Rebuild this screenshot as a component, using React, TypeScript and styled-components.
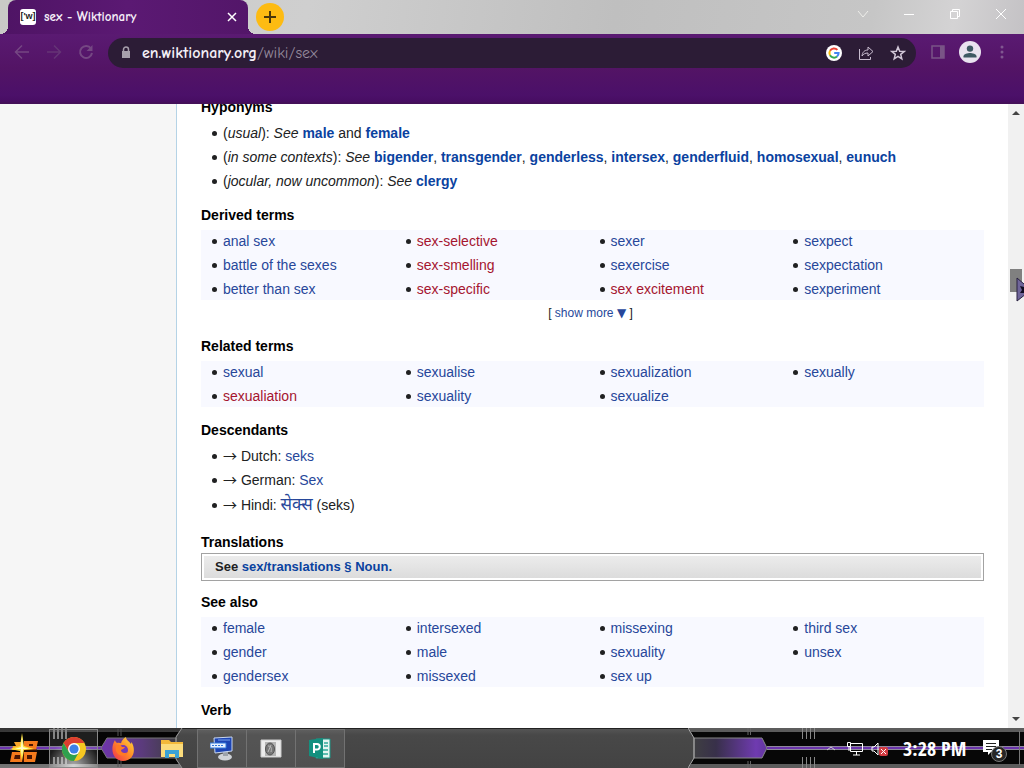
import React from "react";
import styled, { createGlobalStyle, css } from "styled-components";

const Global = createGlobalStyle`
  * { box-sizing: border-box; }
  body { margin: 0; background: #fff; }
  button { border: 0; padding: 0; background: none; font: inherit; color: inherit; }
  svg { display: block; }
`;

const uiFont = `"Comic Neue", Lato, "Open Sans", sans-serif`;

const Screen = styled.div`
  display: flex;
  flex-direction: column;
  height: 100vh;
  overflow: hidden;
  font-family: "Liberation Sans", Arial, sans-serif;
  font-size: 14px;
  line-height: 22px;
  color: #202122;
`;

/* ---------- browser frame ---------- */

const TabStrip = styled.header`
  display: flex;
  flex: none;
  height: 34px;
  padding-left: 8px;
  background: linear-gradient(100deg, #c9cac6 0%, #cfcfcf 30%, #bfbfbf 60%, #c6c6c6 85%, #d4d3d4 93%, #c4c2c5 100%);
`;

const Tab = styled.div`
  position: relative;
  display: flex;
  align-items: center;
  width: 240px;
  padding: 0 8px 0 12px;
  border-radius: 8px 8px 0 0;
  background: linear-gradient(90deg, #4f1465, #5b1973 50%, #531669);
  color: #f6eef8;
  font: 700 13px/18px ${uiFont};

  &::before,
  &::after {
    content: "";
    position: absolute;
    bottom: 0;
    width: 8px;
    height: 8px;
  }
  &::before {
    left: -8px;
    background: radial-gradient(circle at 0 0, transparent 8px, #4f1465 8px);
  }
  &::after {
    right: -8px;
    background: radial-gradient(circle at 100% 0, transparent 8px, #531669 8px);
  }
`;

const Favicon = styled.span`
  width: 16px;
  height: 16px;
  margin-right: 8px;
  border-radius: 3px;
  background: #fff;
  color: #222;
  font: 700 9px/15px "Liberation Sans", sans-serif;
  text-align: center;
`;

const TabTitle = styled.span`
  flex: 1;
`;

const IconButton = styled.button<{ $w?: number; $color?: string }>`
  display: flex;
  flex: none;
  align-items: center;
  justify-content: center;
  width: ${(p) => p.$w ?? 32}px;
  height: 28px;
  color: ${(p) => p.$color ?? "#81548f"};
`;

const NewTab = styled.button`
  display: flex;
  align-items: center;
  justify-content: center;
  width: 28px;
  height: 28px;
  margin: 3px 0 0 8px;
  border-radius: 50%;
  background: #fdbb12;
`;

const WindowControls = styled.div`
  display: flex;
  margin-left: auto;
`;

const Toolbar = styled.nav`
  display: flex;
  flex: none;
  align-items: flex-start;
  height: 70px;
  padding: 4px 6px;
  background: linear-gradient(#5a1a72, #531465 50%, #4b1069 90%, #470d62);
  border-bottom: 2px solid #441059;
`;

const Omnibox = styled.label`
  display: flex;
  flex: 1;
  align-items: center;
  height: 30px;
  margin: 0 6px;
  padding: 0 2px 0 12px;
  border-radius: 15px;
  background: #2c1c36;
  color: #958a9c;
  font: 400 16px/20px ${uiFont};
`;

const Address = styled.input`
  field-sizing: content;
  margin-left: 10px;
  padding: 0;
  border: 0;
  background: none;
  color: #f4eff6;
  font: inherit;
  font-weight: 700;
`;

const Path = styled.span`
  flex: 1;
`;

/* ---------- page ---------- */

const Viewport = styled.div`
  display: flex;
  flex: 1;
  min-height: 0;
`;

const Sidebar = styled.aside`
  flex: none;
  width: 177px;
  border-right: 1px solid #b5d3e6;
  background: #f6f6f6;
`;

const Article = styled.main`
  flex: 1;
  min-width: 0;
  overflow: hidden;
  padding: 0 24px;
  background: #fff;
`;

const Scrolled = styled.div`
  margin-top: -8px;
`;

const Section = styled.section<{ $gap?: number }>`
  margin-bottom: ${(p) => p.$gap ?? 12}px;
`;

const Heading = styled.h4<{ $flush?: boolean }>`
  margin: 0 0 ${(p) => (p.$flush ? 0 : 4)}px;
  color: #000;
  font-size: 14px;
  line-height: 22px;
`;

const bullets = css`
  margin: 0;
  padding: 0 0 0 22px;
  list-style: none;

  li::before {
    content: "";
    display: inline-block;
    width: 5px;
    height: 5px;
    margin: 0 6px 0 -11px;
    border-radius: 50%;
    background: #202122;
    vertical-align: 2px;
  }
`;

const List = styled.ul`
  ${bullets}
  display: flex;
  flex-direction: column;
  gap: 2px;
`;

const TermGrid = styled.ul<{ $rows: number }>`
  ${bullets}
  display: grid;
  grid-template-rows: repeat(${(p) => p.$rows}, auto);
  grid-template-columns: repeat(4, 1fr);
  grid-auto-flow: column;
  gap: 2px 14px;
  background: #f8f9ff;
`;

const Link = styled.a<{ $missing?: boolean; $strong?: boolean }>`
  color: ${(p) => (p.$missing ? "#a5152f" : p.$strong ? "#0a429f" : "#27479a")};
  text-decoration: none;
  ${(p) => p.$strong && css`font-weight: 700;`}
`;

const Arrow = styled.span`
  font-family: "Noto Sans CJK JP", sans-serif;
  line-height: 1;
`;

const Hindi = styled(Link)`
  font-family: "Noto Sans Devanagari", "Noto Sans", sans-serif;
  font-size: 17px;
  line-height: 26px;
`;

const ShowMore = styled.div`
  margin-top: 3px;
  padding-right: 4px;
  font-size: 12px;
  line-height: 20px;
  text-align: center;

  button { color: #27479a; }
  span { font-family: "DejaVu Sans", sans-serif; line-height: 1; }
`;

const NavBox = styled.div`
  padding: 2px;
  border: 1px solid #a2a2a2;

  p {
    margin: 0;
    padding: 0 11px;
    background: linear-gradient(#ececec, #dcdcdc);
    font-size: 13px;
    font-weight: 700;
  }
`;

const ScrollBar = styled.div`
  display: flex;
  flex: none;
  flex-direction: column;
  width: 16px;
  background: #f1f1f1;
`;

const ScrollArrow = styled.button`
  display: flex;
  align-items: center;
  justify-content: center;
  height: 18px;
`;

const Track = styled.div`
  flex: 1;
  padding: 0 2px;
`;

const TrackGap = styled.div`
  height: 25%;
`;

const Thumb = styled.div`
  position: relative;
  height: 23px;
  background: #808080;
`;

const Cursor = styled.svg`
  position: absolute;
  top: 8px;
  left: 6px;
`;

/* ---------- taskbar ---------- */

const Taskbar = styled.footer`
  position: relative;
  display: flex;
  flex: none;
  align-items: stretch;
  height: 40px;
  background: linear-gradient(#555 0, #484848 6px, #434343);
  border-top: 1px solid #222;
`;

const Trim = styled.svg<{ $side: "left" | "right" }>`
  position: absolute;
  top: -1px;
  ${(p) => p.$side}: 0;
`;

const TaskButton = styled.button<{ $open?: boolean; $active?: boolean }>`
  position: relative;
  display: flex;
  align-items: center;
  justify-content: center;
  width: 49px;
  ${(p) => p.$open && css`
    border: 1px solid #727272;
    border-width: 1px 1px 1px 0;
    background: rgba(255, 255, 255, 0.07);
  `}
  ${(p) => p.$active && css`
    border: 1px solid #888;
    background: radial-gradient(circle at 50% 100%, rgba(255, 255, 255, 0.7), rgba(255, 255, 255, 0.1) 60%);
  `}
`;

const PinnedApps = styled.div`
  display: flex;
  width: 198px;
  border-right: 1px solid #727272;
`;

const Tray = styled.div`
  position: relative;
  display: flex;
  align-items: center;
  margin-left: auto;
  padding-right: 14px;
  color: #fff;
`;

const TrayButton = styled.button<{ $w: number }>`
  display: flex;
  justify-content: center;
  width: ${(p) => p.$w}px;
`;

const Clock = styled.time`
  width: 62px;
  margin: 0 18px 0 12px;
  font: 700 20px/26px "Liberation Sans Narrow", "Open Sans Condensed", "Liberation Sans", sans-serif;
  white-space: nowrap;
`;

const Notices = styled.button`
  position: relative;
`;

const Badge = styled.span`
  position: absolute;
  top: 7px;
  left: 8px;
  width: 16px;
  height: 16px;
  border: 1px solid #777;
  border-radius: 50%;
  background: #262626;
  color: #fff;
  font: 700 12px/14px "Liberation Sans", sans-serif;
  text-align: center;
`;

/* ---------- data ---------- */

type Term = { text: string; missing?: boolean };
const t = (text: string): Term => ({ text });
const red = (text: string): Term => ({ text, missing: true });

const derived = [
  t("anal sex"), t("battle of the sexes"), t("better than sex"),
  red("sex-selective"), red("sex-smelling"), red("sex-specific"),
  t("sexer"), t("sexercise"), red("sex excitement"),
  t("sexpect"), t("sexpectation"), t("sexperiment"),
];
const related = [
  t("sexual"), red("sexualiation"), t("sexualise"), t("sexuality"),
  t("sexualization"), t("sexualize"), t("sexually"),
];
const seeAlso = [
  t("female"), t("gender"), t("gendersex"),
  t("intersexed"), t("male"), t("missexed"),
  t("missexing"), t("sexuality"), t("sex up"),
  t("third sex"), t("unsex"),
];
const contexts = ["bigender", "transgender", "genderless", "intersex", "genderfluid", "homosexual", "eunuch"];

const Terms = ({ items, rows }: { items: Term[]; rows: number }) => (
  <TermGrid $rows={rows}>
    {items.map((item) => (
      <li key={item.text}>
        <Link href="#" $missing={item.missing}>{item.text}</Link>
      </li>
    ))}
  </TermGrid>
);

/* ---------- drawings ---------- */

const Stroke = ({ d, size = 16, w = 2 }: { d: string; size?: number; w?: number }) => (
  <svg width={size} height={size} viewBox="0 0 16 16" fill="none" stroke="currentColor" strokeWidth={w}>
    <path d={d} />
  </svg>
);

const GoogleLogo = () => (
  <svg width="16" height="16" viewBox="0 0 16 16" fill="none" strokeWidth="2">
    <circle cx="8" cy="8" r="8" fill="#fff" />
    <path d="M11.4 4.9A4.6 4.6 0 0 0 4 5.8" stroke="#ea4335" />
    <path d="M4 5.8a4.7 4.7 0 0 0 0 4.5" stroke="#fbbc05" />
    <path d="M4 10.3a4.6 4.6 0 0 0 7 1.2" stroke="#34a853" />
    <path d="M11 11.5A4.6 4.6 0 0 0 12.6 8H8.2" stroke="#4285f4" />
  </svg>
);

const Avatar = () => (
  <svg width="22" height="22" viewBox="0 0 22 22">
    <circle cx="11" cy="11" r="11" fill="#e9e3ef" />
    <circle cx="11" cy="7.6" r="3.2" fill="#3f5a63" />
    <path d="M4.5 16.5v-1.2c0-2.2 4.3-3.3 6.5-3.3s6.5 1.1 6.5 3.3v1.2z" fill="#3f5a63" />
  </svg>
);

const LeftTrim = () => (
  <Trim $side="left" width="200" height="40" viewBox="0 0 200 40" aria-hidden="true">
    <defs>
      <linearGradient id="pillLeft"><stop offset="0" stopColor="#6f35ad" /><stop offset="0.55" stopColor="#5b3b7c" /><stop offset="1" stopColor="#3e3e42" /></linearGradient>
      <linearGradient id="edge" x2="0" y2="1"><stop offset="0" stopColor="#333" /><stop offset="1" stopColor="#777" /></linearGradient>
    </defs>
    <path d="M0 0h182l-6 8v24l6 8H0z" fill="#050505" />
    <path d="M0 0h182l-3 4H0zM0 36h179l3 4H0z" fill="url(#edge)" />
    <path d="M0 18.500h102M0 21.500h102" stroke="#77708a" />
    <path d="M0 20h102" stroke="#6e35b0" strokeWidth="2" />
    <path d="M101 20l6-10h69v20h-69z" fill="url(#pillLeft)" stroke="#777" />
    <path d="M182 0l-6 9v22l6 9" fill="none" stroke="#999" />
    <path d="M54 0v11M58 0v11M62 0v11M66 0v11M54 29v11M58 29v11M62 29v11M66 29v11" stroke="#777" strokeWidth="2" />
    <path d="M118 1v7M121 1v7M118 32v7M121 32v7" stroke="#555" />
  </Trim>
);

const RightTrim = () => (
  <Trim $side="right" width="336" height="40" viewBox="0 0 336 40" aria-hidden="true">
    <defs>
      <linearGradient id="pillRight"><stop offset="0" stopColor="#3f3f42" /><stop offset="0.3" stopColor="#38304a" /><stop offset="0.85" stopColor="#6f3bb0" /><stop offset="1" stopColor="#6236a0" /></linearGradient>
    </defs>
    <path d="M0 0h336v40H0l6-10V10z" fill="#070707" />
    <path d="M0 0h336v4H3zM3 36h333v4H0z" fill="#5c5c5c" />
    <path d="M6 10h68l5 10-5 10H6z" fill="url(#pillRight)" stroke="#888" />
    <path d="M79 18.500h257M79 21.500h257" stroke="#8f899c" />
    <path d="M79 20h257" stroke="#6a34ab" strokeWidth="2" />
    <path d="M0 0l6 10v20l-6 10" fill="none" stroke="#aaa" />
    <path d="M114.500 0v11M118.500 0v11M122.500 0v11M126.500 0v11M114.500 29v11M118.500 29v11M122.500 29v11M126.500 29v11" stroke="#888" />
    <path d="M60 0v7M62.500 0v7M60 33v7M62.500 33v7" stroke="#666" />
    <path d="M331.500 3v34" stroke="#777" />
  </Trim>
);

const StartEmblem = () => (
  <svg width="30" height="34" viewBox="0 0 30 34">
    <path d="M14 9h14l-2 9H14zM2 20h25l-2 10H0z" fill="#f47a1c" />
    <path d="M4 10h8v8H2l1-4h3z" fill="#f9a62a" />
    <path d="M19 12h4v2h-4zM5 23h5v4H4zM17 23h5v4h-5zM12 20h2v10h-2z" fill="#4a1502" />
    <path d="M14 18.500h13" stroke="#2b0d02" strokeWidth="2" />
    <path d="M12 1l2 13 10 3-10 1-2 11-2-10-10-2 10-3z" fill="#ffe23a" />
    <path d="M12 4l1 11 6 2-6 0-1 7-1-7-6 0 6-2z" fill="#fffcc8" />
  </svg>
);

const ChromeLogo = () => (
  <svg width="24" height="24" viewBox="0 0 24 24">
    <circle cx="12" cy="12" r="12" fill="#f6c721" />
    <path d="M12 6h10.400A12 12 0 0 0 1.600 6L7 15z" fill="#dc3e30" />
    <path d="M7 15L1.600 6A12 12 0 0 0 12 24l5-9z" fill="#2fa04e" />
    <circle cx="12" cy="12" r="6" fill="#fff" />
    <circle cx="12" cy="12" r="4.600" fill="#3d80e8" />
  </svg>
);

const FirefoxLogo = () => (
  <svg width="24" height="24" viewBox="0 0 24 24">
    <defs>
      <linearGradient id="fox" x1="1" y1="0" x2="0" y2="1"><stop offset="0" stopColor="#ffdf3a" /><stop offset="0.5" stopColor="#ff8528" /><stop offset="1" stopColor="#ee2c55" /></linearGradient>
    </defs>
    <path d="M4 3c0 1 .8 2 2 3 2-.5 3-.2 4 .3C10.500 3.500 13 1 15 0c0 3 3 4 5 7l.5-2c5 8 2 19-8.500 19C3 24-2 13 4 3z" fill="url(#fox)" />
    <circle cx="12" cy="13" r="5" fill="#7439b8" />
    <path d="M5 9c3-2 5-1 6 1h3c-1 2-3 2-4 3 0 3 4 4 7 2-2 5-10 5-12-1z" fill="#ff7a24" />
  </svg>
);

const FolderIcon = () => (
  <svg width="24" height="22" viewBox="0 0 24 22">
    <path d="M1 2h8l2 2h12v15H1z" fill="#f3b93a" />
    <path d="M1 6h22v13H1z" fill="#fbdc7c" />
    <path d="M5 20v-8h14v8h-4v-4H9v4z" fill="#3ba2d6" />
  </svg>
);

const MonitorIcon = () => (
  <svg width="24" height="26" viewBox="0 0 24 26">
    <ellipse cx="15" cy="21" rx="7" ry="3.500" fill="#cfd3d8" />
    <path d="M13 15h5v5h-5z" fill="#9ba2aa" />
    <path d="M4 2l18-1v14L5 17z" fill="#1d45b4" stroke="#c8d7f0" />
    <path d="M0 7h16v5H0z" fill="#e7f1ff" stroke="#3278d8" />
    <path d="M2 9.500h12" stroke="#3278d8" strokeDasharray="2 1" />
    <path d="M8 4h12" stroke="#7aa5ec" />
  </svg>
);

const SafeIcon = () => (
  <svg width="22" height="20" viewBox="0 0 22 20">
    <path d="M1 1h20v17H1z" fill="#ececec" stroke="#ccc" />
    <path d="M5 3h11v14H5z" fill="#b5b5b5" />
    <ellipse cx="10" cy="10" rx="4.500" ry="6" fill="#777" stroke="#555" />
    <path d="M8 7c3 0 4 2 3 6M11 6l-3 7" fill="none" stroke="#bbb" />
  </svg>
);

const PublisherIcon = () => (
  <svg width="22" height="22" viewBox="0 0 22 22">
    <path d="M7 1h14v19H7z" fill="#e4f5f2" stroke="#1b9a8a" />
    <path d="M15 5h4M15 8h4M14 12h5M12 16h7" stroke="#5cbcb0" strokeWidth="2" />
    <path d="M0 2l14-2v21L0 18z" fill="#14907f" />
    <path d="M5 15V6h3a2.500 2.500 0 0 1 0 5.500H5" fill="none" stroke="#fff" strokeWidth="2" />
  </svg>
);

export default function App() {
  return (
    <Screen>
      <Global />
      <TabStrip>
        <Tab>
          <Favicon>['w]</Favicon>
          <TabTitle>sex - Wiktionary</TabTitle>
          <IconButton $w={16} $color="#fff" aria-label="Close tab">
            <Stroke w={1.5} d="M4 4l8 8M12 4l-8 8" />
          </IconButton>
        </Tab>
        <NewTab aria-label="New tab">
          <svg width="12" height="12" viewBox="0 0 12 12"><path d="M6 0v12M0 6h12" stroke="#49370b" strokeWidth="2" /></svg>
        </NewTab>
        <WindowControls>
          <IconButton $w={46} $color="#eeeeea" aria-label="Search tabs"><Stroke w={1} d="M3 5l5 6 5-6" /></IconButton>
          <IconButton $w={46} $color="#fff" aria-label="Minimize"><Stroke w={1} d="M3 8.500h10" /></IconButton>
          <IconButton $w={46} $color="#fff" aria-label="Restore"><Stroke w={1} d="M3.500 5.500h7v7h-7zM5.500 5.500v-2h7v7h-2" /></IconButton>
          <IconButton $w={46} $color="#fff" aria-label="Close"><Stroke w={1} d="M3 3l10 10M13 3L3 13" /></IconButton>
        </WindowControls>
      </TabStrip>

      <Toolbar>
        <IconButton $color="#754783" aria-label="Back"><Stroke w={1.5} d="M15 8H2M8 1.500L1.500 8 8 14.500" /></IconButton>
        <IconButton $color="#653476" aria-label="Forward"><Stroke w={1.5} d="M1 8h13M8 1.500L14.500 8 8 14.500" /></IconButton>
        <IconButton $color="#754783" aria-label="Reload">
          <svg width="16" height="16" viewBox="0 0 16 16" fill="none" stroke="currentColor" strokeWidth="2">
            <path d="M13 4.500A6 6 0 1 0 14 9" />
            <path d="M14.500 1v6h-6z" fill="currentColor" stroke="none" />
          </svg>
        </IconButton>
        <Omnibox>
          <svg width="12" height="14" viewBox="0 0 12 14">
            <path d="M2 5h8v7H2z" fill="#a79fac" />
            <path d="M3.500 6V3.500a2.500 2.500 0 0 1 5 0V6" fill="none" stroke="#a79fac" strokeWidth="1.500" />
          </svg>
          <Address aria-label="Address" defaultValue="en.wiktionary.org" />
          <Path>/wiki/sex</Path>
          <IconButton aria-label="Search with Google"><GoogleLogo /></IconButton>
          <IconButton $color="#c9bdd0" aria-label="Share">
            <Stroke w={1} d="M1.500 4v10.500h11V12M4 11c.5-4 2.500-6 6-6V2l5 4.500-5 4.500V8c-3 0-4.500 1-6 3z" />
          </IconButton>
          <IconButton $color="#d3c8d9" aria-label="Bookmark">
            <Stroke w={1.5} d="M8 2l1.700 4.200 4.500.3-3.500 2.900 1.100 4.400L8 11.400l-3.800 2.400 1.100-4.400L1.800 6.500l4.500-.3z" />
          </IconButton>
        </Omnibox>
        <IconButton $color="#795486" aria-label="Side panel">
          <svg width="14" height="14" viewBox="0 0 14 14"><path d="M1 1h12v12H1z" fill="none" stroke="currentColor" strokeWidth="1.500" /><path d="M9 1h4v12H9z" fill="currentColor" /></svg>
        </IconButton>
        <IconButton aria-label="Profile"><Avatar /></IconButton>
        <IconButton $color="#805790" aria-label="Menu">
          <svg width="4" height="14" viewBox="0 0 4 14" fill="currentColor"><circle cx="2" cy="2" r="1.500" /><circle cx="2" cy="7" r="1.500" /><circle cx="2" cy="12" r="1.500" /></svg>
        </IconButton>
      </Toolbar>

      <Viewport>
        <Sidebar />
        <Article>
          <Scrolled>
            <Section>
              <Heading>Hyponyms</Heading>
              <List>
                <li>(<i>usual</i>): <i>See</i> <Link $strong href="#">male</Link> and <Link $strong href="#">female</Link></li>
                <li>
                  (<i>in some contexts</i>): <i>See</i>{" "}
                  {contexts.map((word, i) => (
                    <React.Fragment key={word}>{i > 0 && ", "}<Link $strong href="#">{word}</Link></React.Fragment>
                  ))}
                </li>
                <li>(<i>jocular, now uncommon</i>): <i>See</i> <Link $strong href="#">clergy</Link></li>
              </List>
            </Section>
            <Section>
              <Heading>Derived terms</Heading>
              <Terms items={derived} rows={3} />
              <ShowMore>[ <button>show more <span>▼</span></button> ]</ShowMore>
            </Section>
            <Section>
              <Heading>Related terms</Heading>
              <Terms items={related} rows={2} />
            </Section>
            <Section>
              <Heading>Descendants</Heading>
              <List>
                <li><Arrow>→</Arrow> Dutch: <Link href="#">seks</Link></li>
                <li><Arrow>→</Arrow> German: <Link href="#">Sex</Link></li>
                <li><Arrow>→</Arrow> Hindi: <Hindi href="#" lang="hi">सेक्स</Hindi> (seks)</li>
              </List>
            </Section>
            <Section $gap={10}>
              <Heading $flush>Translations</Heading>
              <NavBox><p>See <Link $strong href="#">sex/translations § Noun.</Link></p></NavBox>
            </Section>
            <Section>
              <Heading>See also</Heading>
              <Terms items={seeAlso} rows={3} />
            </Section>
            <Section>
              <Heading>Verb</Heading>
            </Section>
          </Scrolled>
        </Article>
        <ScrollBar>
          <ScrollArrow aria-label="Scroll up"><svg width="8" height="4" viewBox="0 0 8 4"><path d="M0 4l4-4 4 4z" fill="#444" /></svg></ScrollArrow>
          <Track>
            <TrackGap />
            <Thumb>
              <Cursor width="8" height="26" viewBox="0 0 8 26">
                <path d="M1 1l14 12L1 24z" fill="#6f659a" stroke="#28213f" />
                <path d="M4 9l4 1v6H4l2-3z" fill="#120d22" />
              </Cursor>
            </Thumb>
          </Track>
          <ScrollArrow aria-label="Scroll down"><svg width="8" height="4" viewBox="0 0 8 4"><path d="M0 0l4 4 4-4z" fill="#444" /></svg></ScrollArrow>
        </ScrollBar>
      </Viewport>

      <Taskbar>
        <LeftTrim />
        <RightTrim />
        <PinnedApps>
          <TaskButton aria-label="Start"><StartEmblem /></TaskButton>
          <TaskButton $active aria-label="Chrome"><ChromeLogo /></TaskButton>
          <TaskButton aria-label="Firefox"><FirefoxLogo /></TaskButton>
          <TaskButton aria-label="Files"><FolderIcon /></TaskButton>
        </PinnedApps>
        <TaskButton $open aria-label="Remote desktop"><MonitorIcon /></TaskButton>
        <TaskButton $open aria-label="Safe"><SafeIcon /></TaskButton>
        <TaskButton $open aria-label="Publisher"><PublisherIcon /></TaskButton>
        <Tray>
          <TrayButton $w={24} aria-label="Hidden icons"><svg width="8" height="5" viewBox="0 0 8 5"><path d="M0 4l4-3 4 3" fill="none" stroke="#ccc" /></svg></TrayButton>
          <TrayButton $w={24} aria-label="Network">
            <svg width="16" height="14" viewBox="0 0 16 14" fill="none" stroke="#fff"><path d="M4 1.500h11.500v8H3.500V5M9.500 9.500v3.500M6 13h7M.5.5h3v4h-3zM2 5v4" /></svg>
          </TrayButton>
          <TrayButton $w={24} aria-label="Volume muted">
            <svg width="17" height="14" viewBox="0 0 17 14"><path d="M1 5h2l4-4v12L3 9H1z" fill="none" stroke="#fff" /><rect x="8" y="5" width="9" height="9" rx="2" fill="#d33b42" /><path d="M10 7l5 5M15 7l-5 5" stroke="#fff" /></svg>
          </TrayButton>
          <Clock>3:28 PM</Clock>
          <Notices aria-label="3 notifications">
            <svg width="27" height="20" viewBox="0 0 27 20"><path d="M0 1h16v12H8l-3 3v-3H0z" fill="#fff" /><path d="M3 4.500h10M3 7.500h10M3 10.500h6" stroke="#222" /></svg>
            <Badge>3</Badge>
          </Notices>
        </Tray>
      </Taskbar>
    </Screen>
  );
}
